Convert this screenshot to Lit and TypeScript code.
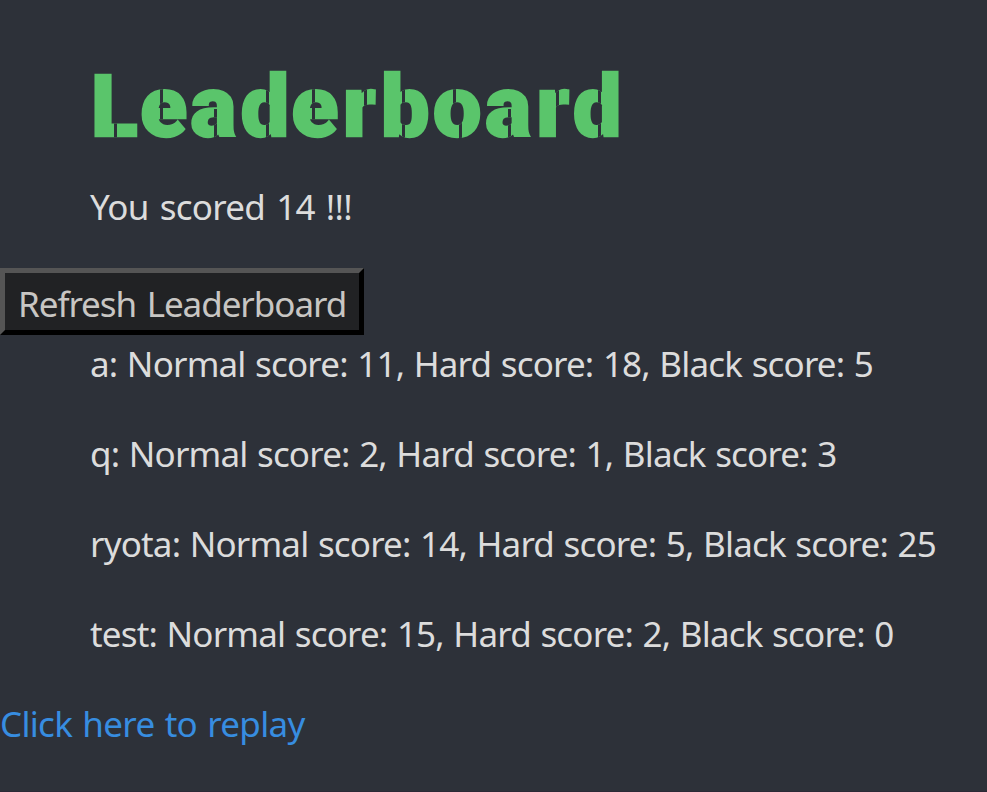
import { LitElement, html, css, unsafeCSS } from "lit";
import { customElement } from "lit/decorators.js";

const rows = [
  { name: "a", normal: 11, hard: 18, black: 5 },
  { name: "q", normal: 2, hard: 1, black: 3 },
  { name: "ryota", normal: 14, hard: 5, black: 25 },
  { name: "test", normal: 15, hard: 2, black: 0 },
];

// Stencil cuts in the title: x, y, width, height inside the heading box.
const cuts = [
  [24, 50, 3, 50],
  [70, 20, 3, 47],
  [124, 55, 3, 50],
  [176, 0, 3, 100],
  [222, 20, 3, 47],
  [274, 0, 3, 100],
  [312, 0, 3, 100],
  [363, 20, 3, 40], [369, 56, 3, 44],
  [418, 55, 3, 50],
  [466, 0, 3, 100],
  [508, 0, 3, 100],
];
const stencil = unsafeCSS(
  cuts
    .map(([x, y, w, h]) => `linear-gradient(#2d3139, #2d3139) ${x}px ${y}px / ${w}px ${h}px no-repeat`)
    .concat("linear-gradient(#5ac56b, #5ac56b)")
    .join(", ")
);

// Letters of the title with their tracking in pixels.
const title: [string, number][] = [
  ["L", 2.5], ["e", 3.5], ["a", 4.5], ["d", 2.5], ["e", 4.5], ["r", 5.5],
  ["b", 3.5], ["o", 4], ["a", 5.5], ["r", 4], ["d", 0],
];

@customElement("app-root")
export class AppRoot extends LitElement {
  static styles = css`
    :host {
      display: block;
      box-sizing: border-box;
      height: 792px;
      overflow: hidden;
      background: #2d3139;
      border-bottom: 1px solid #2b2936;
      color: #dcdcdc;
      font: 35px/54px "Noto Sans", "Open Sans", sans-serif;
      letter-spacing: -0.82px;
      word-spacing: 1.2px;
      white-space: nowrap;
    }
    h1 {
      margin: 54px 0 0 90px;
      padding: 3px 0 0 1px;
      box-sizing: border-box;
      height: 126px;
      font: 900 86px/100px Roboto, sans-serif;
      color: #000;
      -webkit-text-fill-color: transparent;
      -webkit-text-stroke: 2.4px transparent;
      background: ${stencil};
      -webkit-background-clip: text;
      background-clip: text;
    }
    .score {
      margin: 0 0 34px 90px;
      letter-spacing: -0.75px;
      word-spacing: 2.8px;
    }
    button {
      display: block;
      box-sizing: border-box;
      width: 364px;
      height: 67px;
      margin: 0 0 2px;
      padding: 4px 0 0 13px;
      border: 5px solid;
      border-color: #555 #000 #000 #555;
      background: #212224;
      color: #c8c6c3;
      font: inherit;
      line-height: 54px;
      letter-spacing: -1.05px;
      word-spacing: 2.5px;
      text-align: left;
    }
    ul {
      margin: 0 0 36px 90px;
      padding: 0;
      list-style: none;
      display: grid;
      gap: 36px;
    }
    a {
      display: block;
      color: #378de0;
      text-decoration: none;
      letter-spacing: -0.7px;
      word-spacing: 1.8px;
    }
  `;

  render() {
    return html`
      <h1>${title.map(([c, gap]) => html`<span style="letter-spacing:${gap}px">${c}</span>`)}</h1>
      <div class="score">You scored 14 !!!</div>
      <button>Refresh Leaderboard</button>
      <ul>
        ${rows.map(
          (r) => html`<li>${r.name}: Normal score: ${r.normal}, Hard score: ${r.hard}, Black score: ${r.black}</li>`
        )}
      </ul>
      <a>Click here to replay</a>
    `;
  }
}
